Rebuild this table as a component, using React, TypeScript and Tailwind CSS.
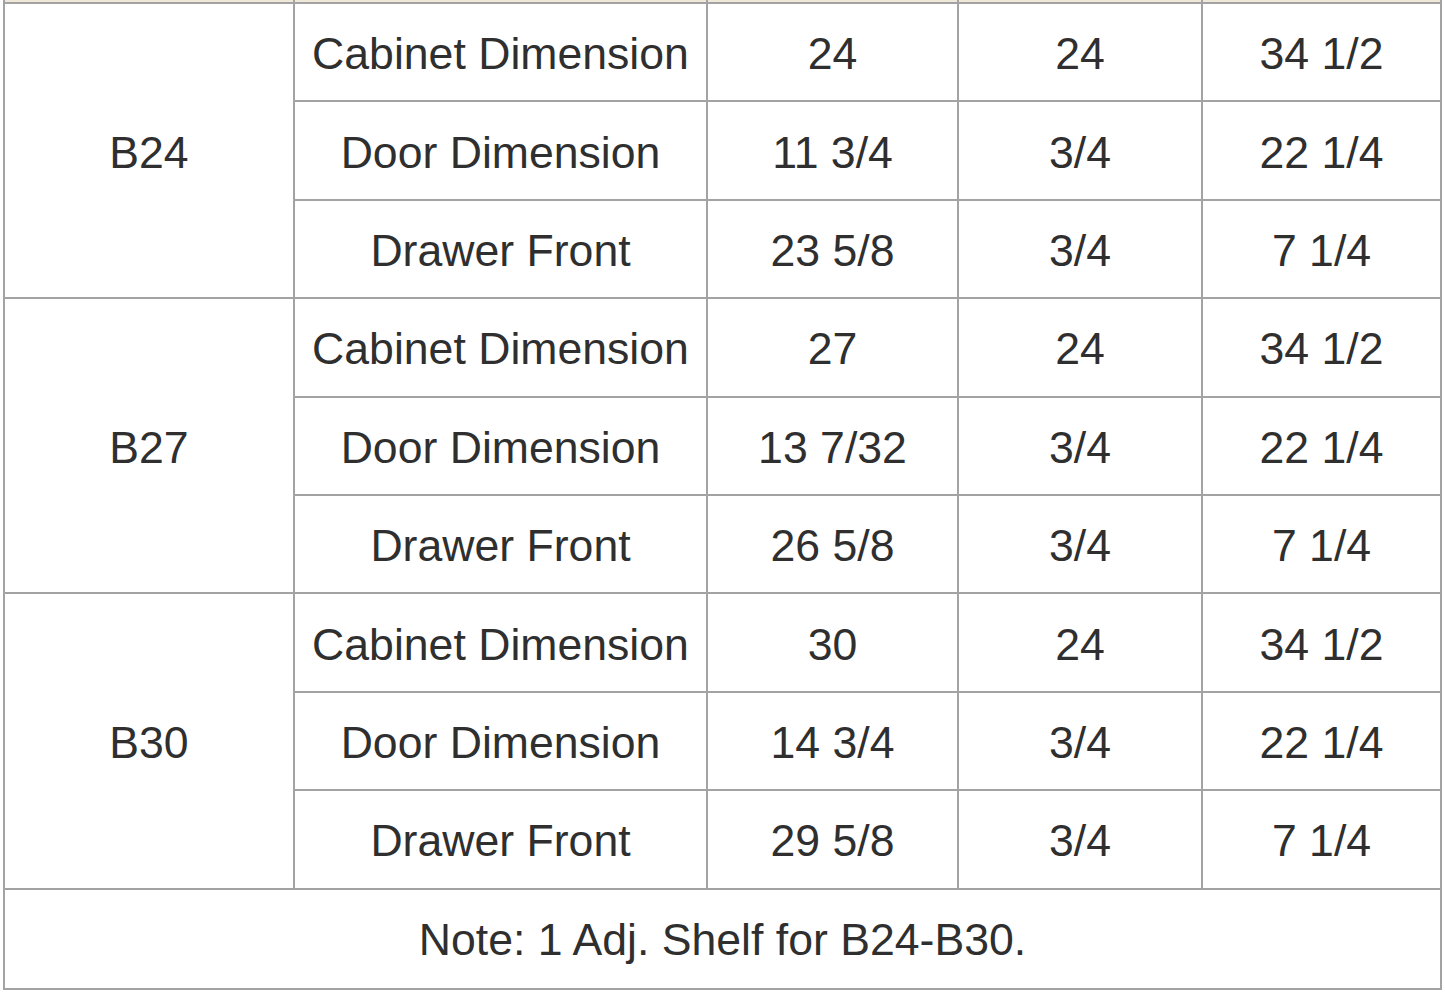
import React from 'react';

interface Group {
  code: string;
  rows: [string, string, string, string][];
}

const groups: Group[] = [
  {
    code: 'B24',
    rows: [
      ['Cabinet Dimension', '24', '24', '34 1/2'],
      ['Door Dimension', '11 3/4', '3/4', '22 1/4'],
      ['Drawer Front', '23 5/8', '3/4', '7 1/4'],
    ],
  },
  {
    code: 'B27',
    rows: [
      ['Cabinet Dimension', '27', '24', '34 1/2'],
      ['Door Dimension', '13 7/32', '3/4', '22 1/4'],
      ['Drawer Front', '26 5/8', '3/4', '7 1/4'],
    ],
  },
  {
    code: 'B30',
    rows: [
      ['Cabinet Dimension', '30', '24', '34 1/2'],
      ['Door Dimension', '14 3/4', '3/4', '22 1/4'],
      ['Drawer Front', '29 5/8', '3/4', '7 1/4'],
    ],
  },
];

const cell = 'border-2 border-[#a3a3a3] text-center align-middle h-[98.4px] px-0 pt-[5px] pb-0';
const strip = 'border-x-2 border-b-2 border-[#a3a3a3] bg-[#efe7d8] h-[3px] p-0';

export default function App() {
  return (
    <div className="w-[1445px] h-[996px] bg-white overflow-hidden font-['Liberation_Sans',Arial,sans-serif] text-[44.6px] text-[#2f2f2f]">
      <table className="table-fixed border-collapse ml-[3px] w-[1437px]">
        <colgroup>
          <col className="w-[290px]" />
          <col className="w-[413px]" />
          <col className="w-[251px]" />
          <col className="w-[244px]" />
          <col className="w-[239px]" />
        </colgroup>
        <tbody>
          <tr>
            <td className={strip} />
            <td className={strip} />
            <td className={strip} />
            <td className={strip} />
            <td className={strip} />
          </tr>
          {groups.map((g) =>
            g.rows.map((r, i) => (
              <tr key={g.code + i}>
                {i === 0 && (
                  <td rowSpan={3} className={cell}>
                    {g.code}
                  </td>
                )}
                {r.map((v, j) => (
                  <td key={j} className={cell}>
                    {v}
                  </td>
                ))}
              </tr>
            ))
          )}
          <tr>
            <td colSpan={5} className="border-2 border-[#a3a3a3] text-center align-middle h-[100px] px-0 pt-[4px] pb-0">
              Note: 1 Adj. Shelf for B24-B30.
            </td>
          </tr>
        </tbody>
      </table>
    </div>
  );
}
